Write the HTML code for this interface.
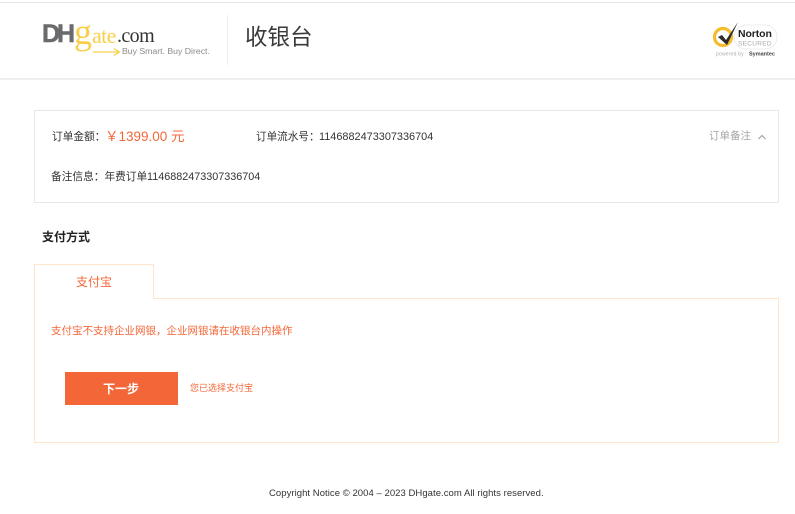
<!DOCTYPE html>
<html><head><meta charset="utf-8">
<style>
*{margin:0;padding:0;box-sizing:border-box}
html,body{width:795px;height:514px;overflow:hidden;background:#fff}
body{position:relative;font-family:"Liberation Sans","Noto Sans CJK SC",sans-serif;color:#333}
.a{position:absolute;white-space:nowrap;line-height:1}
.b{position:absolute}
</style></head><body>
<div class="b" style="left:0;top:2px;width:795px;height:1px;background:#e4e4e4"></div>
<div class="b" style="left:0;top:78px;width:795px;height:2px;background:#eeeeee"></div>

<!-- DHgate logo -->
<div class="a" style="left:42px;top:22px;font-size:25px;font-weight:bold;color:#6a6a6c;letter-spacing:-3px;-webkit-text-stroke:.5px #6a6a6c">DH</div>
<div class="a" style="left:74px;top:14px;font-family:'Liberation Serif',serif;font-size:36px;color:#f9cf4a">g</div>
<div class="a" style="left:92px;top:25px;font-family:'Liberation Serif',serif;font-size:22px;color:#f9cf4a;letter-spacing:-.6px">ate</div>
<div class="a" style="left:117px;top:26px;font-family:'Liberation Serif',serif;font-size:20px;color:#333;letter-spacing:-.6px">.com</div>
<svg class="b" style="left:93px;top:46px" width="28" height="12"><path d="M0 6H26M21 2.500L26.500 6L21 9.500" fill="none" stroke="#f9cf4a" stroke-width="1.200"/></svg>
<div class="a" style="left:122px;top:47px;font-size:8.700px;color:#8a8a8a">Buy Smart. Buy Direct.</div>
<div class="b" style="left:227px;top:15px;width:1px;height:50px;background:#efefef"></div>
<div class="a" style="left:245px;top:27px;font-size:22.500px;color:#3a3a3a">收银台</div>

<!-- Norton -->
<svg class="b" style="left:710px;top:20px" width="70" height="40">
<rect x="24" y="5" width="43" height="24" rx="12" fill="#fff" stroke="#ececec"/>
<circle cx="13" cy="17" r="8.500" fill="#fff" stroke="#f5bd2e" stroke-width="3.200"/>
<path d="M8 17L12 15L16 20L28 2L17 25Z" fill="#2b2b2b"/>
<text x="28" y="17" font-family="Liberation Sans" font-size="10.500" font-weight="bold" fill="#222" letter-spacing="-.1">Norton</text>
<text x="28" y="25.500" font-family="Liberation Sans" font-size="6.500" fill="#aaa" letter-spacing=".3">SECURED</text>
<text x="6" y="35.500" font-family="Liberation Sans" font-size="5" fill="#aaa" letter-spacing=".2">powered by</text>
<text x="39" y="35.500" font-family="Liberation Sans" font-size="5.500" font-weight="bold" fill="#444">Symantec</text>
</svg>

<!-- Order box -->
<div class="b" style="left:34px;top:110px;width:745px;height:93px;border:1px solid #e8e8e8"></div>
<div class="a" style="left:52px;top:132px;font-size:10.700px;color:#333">订单金额：</div>
<div class="a" style="left:105px;top:130px;font-size:13.500px;color:#f4683a">￥1399.00 元</div>
<div class="a" style="left:256px;top:132px;font-size:10.600px;color:#333">订单流水号：</div>
<div class="a" style="left:319px;top:132px;font-size:10.900px;color:#333">1146882473307336704</div>
<div class="a" style="left:51px;top:172px;font-size:10.700px;color:#333">备注信息：年费订单</div>
<div class="a" style="left:147px;top:172px;font-size:10.800px;color:#333">1146882473307336704</div>
<div class="a" style="left:709px;top:131px;font-size:10.500px;color:#a6a6a6">订单备注</div>
<svg class="b" style="left:757px;top:133px" width="10" height="8"><path d="M1.500 6L5 2.500L8.500 6" fill="none" stroke="#999" stroke-width="1"/></svg>

<!-- Pay -->
<div class="a" style="left:42px;top:231px;font-size:12px;font-weight:bold;color:#222">支付方式</div>
<div class="b" style="left:34px;top:298px;width:745px;height:145px;border:1px solid #fde6cc"></div>
<div class="b" style="left:34px;top:264px;width:120px;height:35px;border:1px solid #fde6cc;border-bottom:none;background:#fff"></div>
<div class="a" style="left:76px;top:276px;font-size:12px;color:#f4683a">支付宝</div>
<div class="a" style="left:51px;top:326px;font-size:10.500px;color:#f4683a">支付宝不支持企业网银，企业网银请在收银台内操作</div>
<div class="b" style="left:65px;top:372px;width:113px;height:33px;background:#f26638"></div>
<div class="a" style="left:103px;top:383px;font-size:12px;font-weight:bold;color:#fff">下一步</div>
<div class="a" style="left:190px;top:384px;font-size:9px;color:#f4683a">您已选择支付宝</div>

<div class="a" style="left:269px;top:489px;font-size:9.500px;color:#333;letter-spacing:.05px">Copyright Notice © 2004 – 2023 DHgate.com All rights reserved.</div>
</body></html>
